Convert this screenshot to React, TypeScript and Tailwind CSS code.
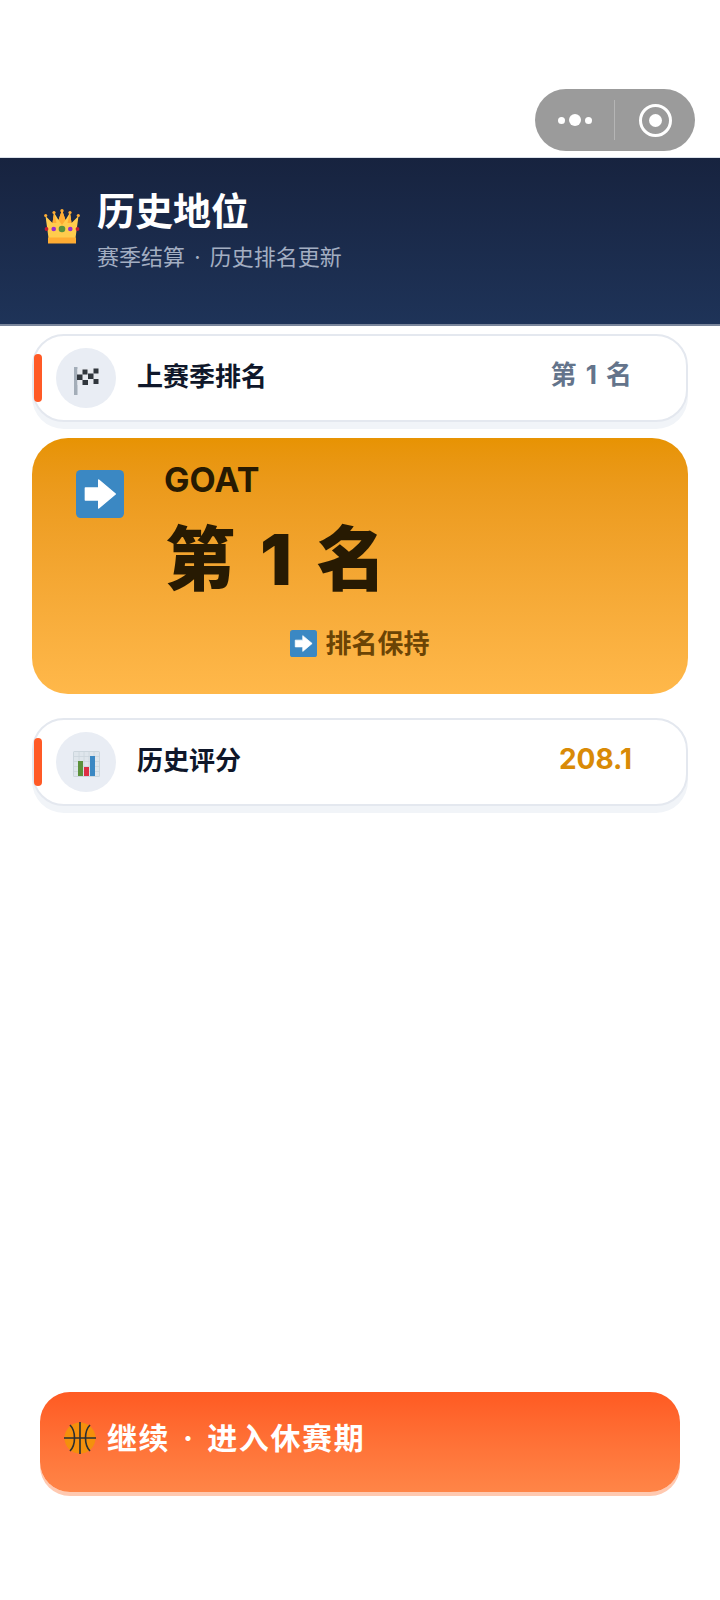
import React from "react";

const FONT = '"Inter","Noto Sans CJK SC",sans-serif';

function Crown() {
  return (
    <svg viewBox="0 0 36 35" className="w-[36px] h-[35px] block">
      <path d="M4.5 29 L1.5 7 L8.5 14 L10 3.5 L14.5 11 L18 1 L21.5 11 L26 3.5 L27.5 14 L34.5 7 L31.5 29 Z" fill="#ffcc4d" />
      <path d="M8.5 14 L10 3.5 L12.5 14 Z M14.5 11 L18 1 L21.5 11 L18 16 Z M23.5 14 L26 3.5 L27.5 14 Z" fill="#ffac33" />
      <rect x="4" y="28.5" width="28" height="6" fill="#ffac33" />
      <circle cx="1.7" cy="6.5" r="1.6" fill="#ffac33" />
      <circle cx="10" cy="3.5" r="1.6" fill="#ffac33" />
      <circle cx="18" cy="1.8" r="1.7" fill="#ffac33" />
      <circle cx="26" cy="3.5" r="1.6" fill="#ffac33" />
      <circle cx="34.3" cy="6.5" r="1.6" fill="#ffac33" />
      <circle cx="18" cy="20" r="3.3" fill="#5c913b" />
      <circle cx="9.7" cy="20" r="2.3" fill="#9a2ecb" />
      <circle cx="26.3" cy="20" r="2.3" fill="#9a2ecb" />
      <circle cx="2.5" cy="20" r="1.9" fill="#be1931" />
      <circle cx="33.5" cy="20" r="1.9" fill="#be1931" />
    </svg>
  );
}

function Flag() {
  return (
    <svg viewBox="0 0 25 28" className="w-[25px] h-[28px] block mt-[5px]">
      <rect x="0" y="0" width="3.5" height="28" fill="#a3adb8" />
      <path d="M3.5 2 C9 0 14 3 24.5 0 V16 C15 19 9 16 3.5 18 Z" fill="#e8ebf0" />
      <g fill="#31373d">
        <rect x="8.5" y="2.5" width="5" height="5" />
        <rect x="19.5" y="1.5" width="5" height="5" />
        <rect x="3" y="7.5" width="5.5" height="5.5" />
        <rect x="14" y="6.5" width="5.5" height="5.5" />
        <rect x="8.5" y="13" width="5.5" height="5" />
        <rect x="19.5" y="12" width="5" height="5" />
      </g>
    </svg>
  );
}

function Chart() {
  return (
    <svg viewBox="0 0 27 26" className="w-[27px] h-[26px] block mt-[4px]">
      <rect x="0" y="0" width="27" height="26" rx="1.5" fill="#ccd6dd" />
      <rect x="1" y="1" width="25" height="24" fill="#dfe6ec" />
      <path d="M1 5.5H26M1 10.5H26M1 15.5H26M1 20.5H26M6 1V25M11 1V25M16 1V25M21 1V25" stroke="#ccd6dd" strokeWidth="0.8" />
      <rect x="5" y="10" width="5" height="15" fill="#5c913b" />
      <rect x="11" y="16" width="5" height="9" fill="#dd2e44" />
      <rect x="17" y="5" width="5" height="20" fill="#3b88c3" />
    </svg>
  );
}

function Arrow({ className }: { className: string }) {
  return (
    <svg viewBox="0 0 36 36" className={className}>
      <rect x="0" y="0" width="36" height="36" rx="3.5" fill="#3b88c3" />
      <path d="M7 13.5 H17 V7.5 L29.5 18 L17 28.5 V22.5 H7 Z" fill="#fff" stroke="#fff" strokeWidth="1" strokeLinejoin="round" />
    </svg>
  );
}

function Ball() {
  return (
    <svg viewBox="0 0 32 32" className="w-[32px] h-[32px] block">
      <circle cx="16" cy="16" r="15.5" fill="#f4900c" />
      <g fill="none" stroke="#292f33" strokeWidth="1.6">
        <path d="M16 0V32M0 16H32" />
        <path d="M6 3C12 9 12 23 6 29M26 3C20 9 20 23 26 29" />
      </g>
    </svg>
  );
}

function Row({ icon, label, value, valueClass }: { icon: React.ReactNode; label: string; value: string; valueClass: string }) {
  return (
    <div className="relative mx-[32px] h-[88px] rounded-[32px] border-2 border-[#e4e8ef] bg-white shadow-[0_7px_0_#f1f4f8] flex items-center pl-[22px] pr-[54px]">
      <div className="absolute left-0 top-[18px] w-[8px] h-[48px] rounded-[4px] bg-[#ff5a26]" />
      <div className="w-[60px] h-[60px] rounded-full bg-[#e9edf4] flex items-center justify-center shrink-0">{icon}</div>
      <div className="ml-[21px] -mt-[2px] text-[26px] font-bold text-[#0f172a] flex-1 leading-none">{label}</div>
      <div className={`-mt-[6px] font-bold leading-none ${valueClass}`}>{value}</div>
    </div>
  );
}

export default function App() {
  return (
    <div className="relative w-[720px] h-[1600px] bg-white flex flex-col overflow-hidden" style={{ fontFamily: FONT }}>
      <div className="absolute left-[535px] top-[89px] w-[160px] h-[62px] rounded-full bg-[#9b9b9b] flex items-center">
        <div className="w-[79px] flex items-center justify-center gap-[4px]">
          <span className="w-[7px] h-[7px] rounded-full bg-white" />
          <span className="w-[12px] h-[12px] rounded-full bg-white" />
          <span className="w-[7px] h-[7px] rounded-full bg-white" />
        </div>
        <div className="w-px h-[40px] bg-[#b5b5b5]" />
        <div className="flex-1 flex items-center justify-center">
          <div className="w-[33px] h-[33px] rounded-full border-[3px] border-white flex items-center justify-center">
            <span className="w-[13px] h-[13px] rounded-full bg-white" />
          </div>
        </div>
      </div>

      <div className="mt-[157px] h-[169px] bg-gradient-to-b from-[#17233f] to-[#1e3358] border-t border-[#dbe1ea] border-b-2 border-b-[#7a869c] flex items-start pl-[44px] pt-[31px]">
        <div className="mt-[20px] mr-[17px]"><Crown /></div>
        <div>
          <div className="text-[38px] font-bold text-white leading-[44px]">历史地位</div>
          <div className="text-[22px] text-[#a3aec2] leading-[30px] mt-[9px] [word-spacing:3px]">赛季结算 · 历史排名更新</div>
        </div>
      </div>

      <div className="mt-[8px]">
        <Row icon={<Flag />} label="上赛季排名" value="第 1 名" valueClass="text-[26px] text-[#64748b] [word-spacing:3px]" />
      </div>

      <div className="mt-[16px] mx-[32px] h-[256px] rounded-[36px] bg-gradient-to-b from-[#e79303] to-[#ffb84a] flex flex-col">
        <div className="flex items-start pl-[44px] pt-[32px]">
          <Arrow className="w-[48px] h-[48px] block" />
          <div className="ml-[40px] -mt-[11px] text-[#271a02]">
            <div className="text-[34px] font-bold leading-[42px]">GOAT</div>
            <div className="text-[70px] font-black leading-[90px] mt-[14px] ml-[1px] [word-spacing:11px]">第 1 名</div>
          </div>
        </div>
        <div className="flex items-center justify-center mt-[25px] text-[26px] font-bold text-[#6b4405] leading-none">
          <Arrow className="w-[27px] h-[27px] block mr-[8px]" />
          <span>排名保持</span>
        </div>
      </div>

      <div className="mt-[24px]">
        <Row icon={<Chart />} label="历史评分" value="208.1" valueClass="text-[28px] text-[#d98a06]" />
      </div>

      <div className="mt-auto mb-[108px] mx-[40px] h-[100px] rounded-[30px] bg-gradient-to-b from-[#ff5a22] to-[#ff8547] shadow-[0_4px_0_#ffc9b0] flex items-start pl-[24px] pt-[30px]">
        <Ball />
        <span className="ml-[11px] text-[30px] font-bold text-white leading-[32px] tracking-[1.6px] [word-spacing:4px]">继续 · 进入休赛期</span>
      </div>
    </div>
  );
}
